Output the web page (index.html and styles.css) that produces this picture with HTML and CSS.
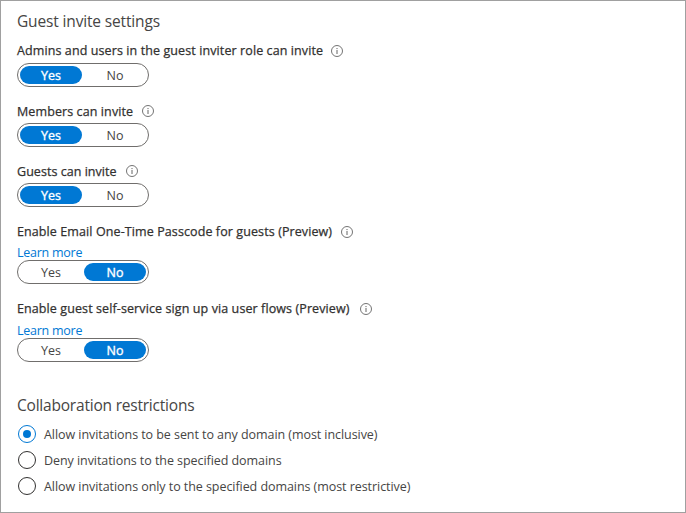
FILE: index.html
```html
<!DOCTYPE html>
<html lang="en">
<head>
<meta charset="utf-8">
<title>Guest invite settings</title>
<link rel="stylesheet" href="styles.css">
</head>
<body>
<svg class="defs" aria-hidden="true">
  <symbol id="info" viewBox="0 0 12 12">
    <circle cx="6" cy="6" r="5.5" fill="none" stroke="#646464" stroke-width="0.9"/>
    <path d="M6 5v4" stroke="#646464" stroke-width="1"/>
    <path d="M6 3v1.1" stroke="#646464" stroke-width="1"/>
  </symbol>
</svg>
<main class="panel">
  <h2 class="heading">Guest invite settings</h2>
  <section class="setting">
    <div class="label"><span class="name">Admins and users in the guest inviter role can invite</span><svg class="info"><use href="#info"/></svg></div>
    <div class="toggle"><span class="option selected">Yes</span><span class="option">No</span></div>
  </section>
  <section class="setting">
    <div class="label"><span class="name low">Members can invite</span><svg class="info"><use href="#info"/></svg></div>
    <div class="toggle"><span class="option selected">Yes</span><span class="option">No</span></div>
  </section>
  <section class="setting">
    <div class="label"><span class="name low tight">Guests can invite</span><svg class="info"><use href="#info"/></svg></div>
    <div class="toggle"><span class="option selected">Yes</span><span class="option">No</span></div>
  </section>
  <section class="setting linked">
    <div class="label"><span class="name">Enable Email One-Time Passcode for guests (Preview)</span><svg class="info"><use href="#info"/></svg></div>
    <a class="link">Learn more</a>
    <div class="toggle"><span class="option">Yes</span><span class="option selected">No</span></div>
  </section>
  <section class="setting linked signup-flow">
    <div class="label"><span class="name">Enable guest self-service sign up via user flows (Preview)</span><svg class="info"><use href="#info"/></svg></div>
    <a class="link">Learn more</a>
    <div class="toggle"><span class="option">Yes</span><span class="option selected">No</span></div>
  </section>
  <h2 class="heading restrictions">Collaboration restrictions</h2>
  <div class="radios">
    <div class="radio"><span class="circle checked"></span><span class="text">Allow invitations to be sent to any domain (most inclusive)</span></div>
    <div class="radio"><span class="circle"></span><span class="text">Deny invitations to the specified domains</span></div>
    <div class="radio"><span class="circle"></span><span class="text">Allow invitations only to the specified domains (most restrictive)</span></div>
  </div>
</main>
</body>
</html>
```
FILE: styles.css
```css
* { box-sizing: border-box; }
body {
  margin: 0;
  background: #fff;
  color: #464544;
  font: 12.5px/20px "Open Sans", "Noto Sans", sans-serif;
}
.defs { display: none; }
.panel {
  width: 686px;
  height: 513px;
  padding: 10px 16px 0;
  border: 1px solid #a0a0a0;
  overflow: hidden;
  white-space: nowrap;
}
.heading {
  margin: 0 0 10px;
  height: 20px;
  font-size: 15.5px;
  font-weight: 400;
  line-height: 20px;
  letter-spacing: -0.15px;
}
.setting { margin-bottom: 14px; }
.linked { margin-top: 15px; margin-bottom: 0; }
.label {
  display: flex;
  align-items: center;
  gap: 8px;
  height: 20px;
  margin-bottom: 2px;
}
.name {
  height: 20px;
  color: #323130;
  letter-spacing: 0.1px;
  -webkit-text-stroke: 0.25px #323130;
}
.low { line-height: 22px; }
.tight { letter-spacing: 0.04px; }
.info { width: 12px; height: 12px; }
.low + .info { margin-left: 1px; }
.linked .info { margin-left: 1px; }
.signup-flow .info { margin-left: 2px; }
.linked .label { margin-bottom: 0; }
.link {
  display: block;
  height: 18px;
  line-height: 22px;
  letter-spacing: -0.25px;
  color: #0078d4;
}
.signup-flow .link { height: 19px; line-height: 23px; }
.toggle {
  display: flex;
  justify-content: space-between;
  width: 132px;
  height: 24px;
  padding: 2px;
  border: 1px solid #706e6c;
  border-radius: 12px;
}
.option {
  width: 62px;
  height: 18px;
  border-radius: 9px;
  line-height: 20px;
  text-align: center;
}
.selected {
  background: #0078d4;
  color: #fff;
  -webkit-text-stroke: 0.35px #fff;
}
.restrictions { margin: 33px 0 10px; letter-spacing: -0.21px; }
.radio {
  display: flex;
  align-items: center;
  gap: 8px;
  height: 18px;
  margin: 0 0 8px 1px;
}
.text { height: 18px; line-height: 20px; letter-spacing: -0.06px; }
.circle {
  display: flex;
  width: 18px;
  height: 18px;
  border: 1px solid #323130;
  border-radius: 50%;
}
.checked { border-color: #0078d4; }
.checked::after {
  content: "";
  width: 8px;
  height: 8px;
  margin: auto;
  border-radius: 50%;
  background: #0078d4;
}
```
